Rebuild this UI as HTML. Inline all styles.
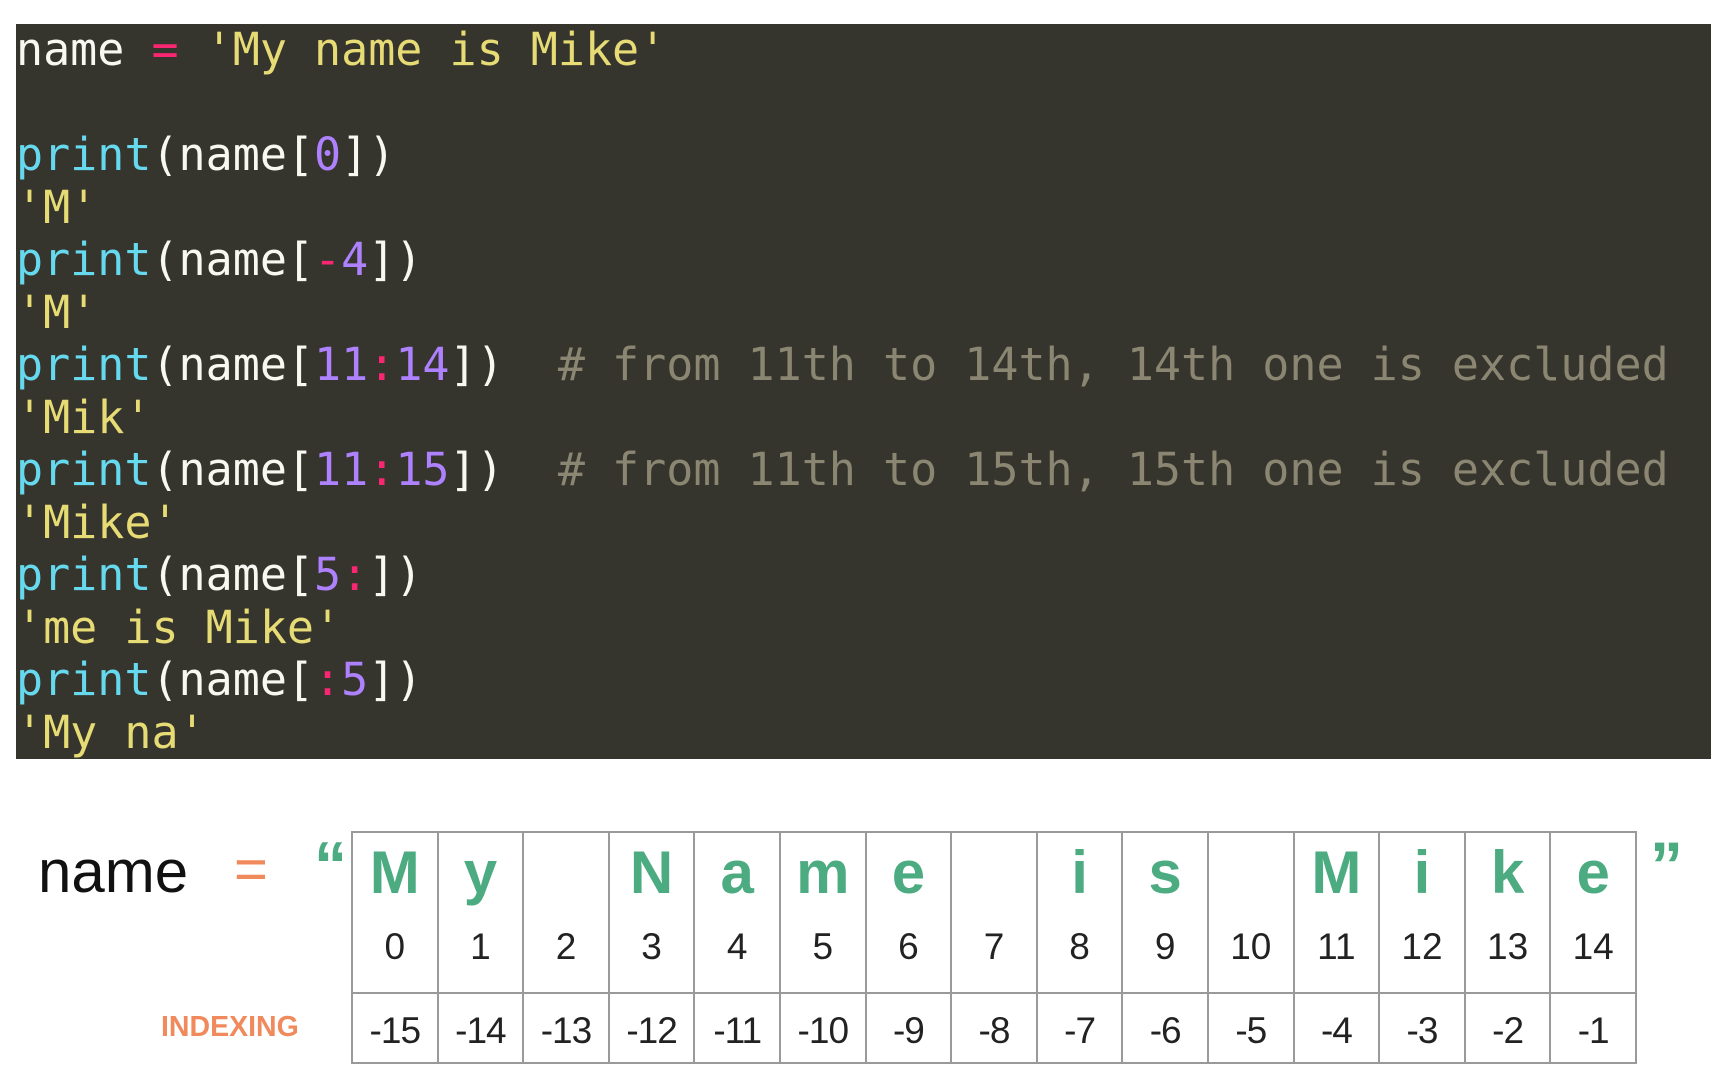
<!DOCTYPE html>
<html><head><meta charset="utf-8"><style>
html,body{margin:0;padding:0;background:#fff;width:1724px;height:1065px;overflow:hidden;position:relative}
#code{position:absolute;left:16px;top:24px;width:1695px;height:735px;background:#35342d;font-family:"DejaVu Sans Mono","Liberation Mono",monospace;font-size:45px;line-height:52.5px;color:#f8f8f2;white-space:pre}
.k{color:#66d9ef}.s{color:#e6db74}.n{color:#ae81ff}.o{color:#f92672}.c{color:#8b8672}
.t{position:absolute;font-family:"Liberation Sans",sans-serif}
.cell{position:absolute;text-align:center;font-family:"Liberation Sans",sans-serif}
.L{color:#4dab82;font-weight:bold;font-size:60px;top:838px;height:70px;line-height:70px}
.P{color:#222;font-size:37px;top:922px;height:50px;line-height:50px}
.N{color:#222;font-size:37px;top:1006px;height:50px;line-height:50px;letter-spacing:-1px}
.v{position:absolute;top:831px;height:233px;width:2px;background:#9a9a9a}
.h{position:absolute;left:352px;width:1284px;height:2px;background:#9a9a9a}
</style></head><body>
<div id="code">name <span class="o">=</span> <span class="s">'My name is Mike'</span>

<span class="k">print</span>(name[<span class="n">0</span>])
<span class="s">'M'</span>
<span class="k">print</span>(name[<span class="o">-</span><span class="n">4</span>])
<span class="s">'M'</span>
<span class="k">print</span>(name[<span class="n">11</span><span class="o">:</span><span class="n">14</span>])  <span class="c"># from 11th to 14th, 14th one is excluded</span>
<span class="s">'Mik'</span>
<span class="k">print</span>(name[<span class="n">11</span><span class="o">:</span><span class="n">15</span>])  <span class="c"># from 11th to 15th, 15th one is excluded</span>
<span class="s">'Mike'</span>
<span class="k">print</span>(name[<span class="n">5</span><span class="o">:</span>])
<span class="s">'me is Mike'</span>
<span class="k">print</span>(name[<span class="o">:</span><span class="n">5</span>])
<span class="s">'My na'</span></div>
<div class="t" style="left:38px;top:838px;font-size:60px;line-height:68px;color:#111">name</div>
<div class="t" style="left:234px;top:838px;font-size:58px;line-height:64px;color:#f08a5d">=</div>
<div class="t" style="left:314px;top:832px;font-size:66px;line-height:66px;color:#4dab82;font-weight:bold">“</div>
<div class="t" style="left:1650px;top:832px;font-size:66px;line-height:66px;color:#4dab82;font-weight:bold">”</div>
<div class="t" style="left:161px;top:1010px;font-size:28.5px;line-height:34px;color:#f08a5d;font-weight:bold">INDEXING</div>
<div class="h" style="top:831px"></div>
<div class="h" style="top:992px"></div>
<div class="h" style="top:1062px"></div>
<div id="tbl"></div>
<script>
var L=["M","y","","N","a","m","e","","i","s","","M","i","k","e"];
var x0=352,w=85.6,h="";
for(var i=0;i<=15;i++){h+='<div class="v" style="left:'+(x0+i*w-1)+'px"></div>';}
for(var i=0;i<15;i++){var l=x0+i*w;
h+='<div class="cell L" style="left:'+l+'px;width:'+w+'px">'+L[i]+'</div>';
h+='<div class="cell P" style="left:'+l+'px;width:'+w+'px">'+i+'</div>';
h+='<div class="cell N" style="left:'+l+'px;width:'+w+'px">-'+(15-i)+'</div>';}
document.getElementById("tbl").innerHTML=h;
</script>
</body></html>
